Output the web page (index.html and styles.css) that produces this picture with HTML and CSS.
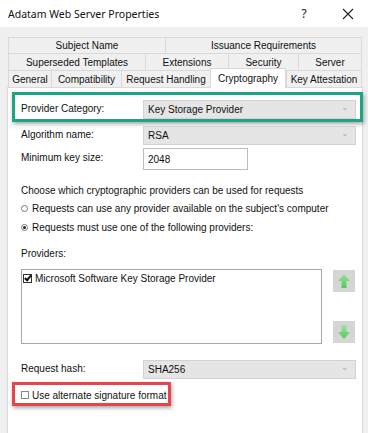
FILE: index.html
```html
<!DOCTYPE html>
<html lang="en">
<head>
    <meta charset="UTF-8">
    <meta name="viewport" content="width=device-width, initial-scale=1.0">
    <title>Adatam Web Server Properties</title>
    <link rel="stylesheet" href="styles.css">
</head>
<body>
    <div class="titlebar">
        <span class="title">Adatam Web Server Properties</span>
        <span class="help">?</span>
        <span class="close">
            <svg width="12" height="12" viewBox="0 0 12 12"><path d="M1 1L11 11M11 1L1 11" stroke="#222" stroke-width="1.1" fill="none"/></svg>
        </span>
    </div>

    <div class="tabs">
        <div class="tab-row row-1">
            <div class="tab">Subject Name</div>
            <div class="tab">Issuance Requirements</div>
        </div>
        <div class="tab-row row-2">
            <div class="tab">Superseded Templates</div>
            <div class="tab">Extensions</div>
            <div class="tab">Security</div>
            <div class="tab">Server</div>
        </div>
        <div class="tab-row row-3">
            <div class="tab">General</div>
            <div class="tab">Compatibility</div>
            <div class="tab">Request Handling</div>
            <div class="tab active">Cryptography</div>
            <div class="tab">Key Attestation</div>
        </div>
    </div>

    <div class="panel">
        <!-- highlighted row -->
        <div class="field highlight-green">
            <span class="label">Provider Category:</span>
            <div class="select">Key Storage Provider<span class="chev">&#8964;</span></div>
        </div>

        <div class="field row-algo">
            <span class="label">Algorithm name:</span>
            <div class="select">RSA<span class="chev">&#8964;</span></div>
        </div>

        <div class="field row-keysize">
            <span class="label">Minimum key size:</span>
            <div class="textbox">2048</div>
        </div>

        <p class="line choose">Choose which cryptographic providers can be used for requests</p>
        <div class="line radio-line first"><span class="radio"></span>Requests can use any provider available on the subject's computer</div>
        <div class="line radio-line second"><span class="radio checked"></span>Requests must use one of the following providers:</div>

        <p class="line providers-label">Providers:</p>
        <div class="providers">
            <div class="listbox">
                <div class="list-item"><span class="check on"></span>Microsoft Software Key Storage Provider</div>
            </div>
            <div class="move-btns">
                <div class="move-btn">
                    <svg width="14" height="16" viewBox="0 0 14 16"><defs><linearGradient id="gu" x1="0" y1="0" x2="0" y2="1"><stop offset="0" stop-color="#9be49b"/><stop offset="1" stop-color="#5cc45c"/></linearGradient></defs><path d="M7 1L13 8H9.5V15H4.5V8H1Z" fill="url(#gu)"/></svg>
                </div>
                <div class="move-btn">
                    <svg width="14" height="16" viewBox="0 0 14 16"><defs><linearGradient id="gd" x1="0" y1="0" x2="0" y2="1"><stop offset="0" stop-color="#9be49b"/><stop offset="1" stop-color="#5cc45c"/></linearGradient></defs><path d="M7 15L13 8H9.5V1H4.5V8H1Z" fill="url(#gd)"/></svg>
                </div>
            </div>
        </div>

        <div class="field row-hash">
            <span class="label">Request hash:</span>
            <div class="select">SHA256<span class="chev">&#8964;</span></div>
        </div>

        <div class="highlight-red">
            <span class="check"></span>Use alternate signature format
        </div>
    </div>
</body>
</html>
```

FILE: styles.css
```css
* {
    margin: 0;
    padding: 0;
    box-sizing: border-box;
}

body {
    font-family: 'Liberation Sans', Arial, sans-serif;
    font-size: 10px;
    color: #111;
    background: #f0f0f0;
    min-height: 100vh;
    display: flex;
    flex-direction: column;
}

/* title bar */
.titlebar {
    height: 27px;
    background: #fff;
    display: flex;
    align-items: center;
    padding-left: 8px;
}

.title {
    font-family: 'Noto Sans', sans-serif;
    font-size: 10.5px;
    color: #111;
    flex: 1;
}

.help {
    font-family: 'Noto Sans', sans-serif;
    font-size: 12px;
    color: #222;
    width: 10px;
    text-align: center;
    margin-right: 33px;
}

.close {
    display: flex;
    margin-right: 14px;
}

/* tabs */
.tabs {
    margin: 10px 6px 0 8px;
}

.tab-row {
    display: grid;
    border-right: 1px solid #d9d9d9;
}

.row-1 { grid-template-columns: 157px 1fr; height: 16px; }
.row-2 { grid-template-columns: 137px 83px 70px 1fr; height: 17px; }
.row-3 { grid-template-columns: 43px 70px 89px 76px 1fr; height: 17px; }

.tab {
    border-top: 1px solid #d9d9d9;
    border-left: 1px solid #d9d9d9;
    display: flex;
    align-items: center;
    justify-content: center;
    white-space: nowrap;
    color: #111;
}

.tab.active {
    background: #fff;
    margin-top: -2px;
    margin-bottom: -1px;
    border-right: 1px solid #d9d9d9;
    position: relative;
    z-index: 1;
    padding-bottom: 1px;
}

/* panel */
.panel {
    flex: 1;
    margin: 0 5px 0 7px;
    background: #fff;
    border: 1px solid #d9d9d9;
    border-bottom: none;
    padding-top: 4px;
}

.field {
    display: flex;
    align-items: center;
    padding-left: 13px;
}

.label {
    width: 122px;
    padding-bottom: 3px;
}

.select {
    width: 213px;
    height: 19px;
    background: #e5e5e5;
    border: 1px solid #d2d2d2;
    display: flex;
    align-items: center;
    justify-content: space-between;
    padding: 0 6px 0 4px;
}

.chev {
    color: #aaa;
    font-size: 9px;
    line-height: 1;
    margin-top: -4px;
}

.highlight-green {
    margin: 0 -1px 0 4px;
    border: 3px solid #1ca585;
    padding: 5px 4px 0 6px;
    height: 30px;
    box-shadow: 1px 2px 4px rgba(0, 0, 0, 0.35);
}

.row-algo {
    margin-top: 4px;
}

.row-keysize {
    margin-top: 3px;
}

.textbox {
    width: 105px;
    height: 22px;
    border: 1px solid #bdbdbd;
    padding-left: 4px;
    display: flex;
    align-items: center;
}

.line {
    padding-left: 13px;
    height: 14px;
    display: flex;
    align-items: center;
}

.choose {
    margin-top: 13px;
}

.radio-line.first {
    margin-top: 4px;
}

.radio-line.second {
    margin-top: 5px;
}

.radio {
    width: 7px;
    height: 7px;
    border: 1px solid #777;
    border-radius: 50%;
    margin-right: 4px;
    display: flex;
    align-items: center;
    justify-content: center;
}

.radio.checked::after {
    content: "";
    width: 3px;
    height: 3px;
    border-radius: 50%;
    background: #222;
}

.providers-label {
    margin-top: 12px;
}

.providers {
    display: flex;
    margin: 9px 0 0 13px;
    gap: 11px;
}

.listbox {
    width: 301px;
    height: 75px;
    border: 1px solid #a8a8a8;
    padding: 3px 1px;
}

.list-item {
    display: flex;
    align-items: center;
}

.check {
    width: 9px;
    height: 9px;
    border: 1px solid #888;
    margin-right: 3px;
    display: inline-flex;
    align-items: center;
    justify-content: center;
    flex-shrink: 0;
}

.check.on {
    border-color: #333;
}

.check.on::after {
    content: "";
    width: 2px;
    height: 5px;
    border: solid #111;
    border-width: 0 2px 2px 0;
    transform: rotate(40deg);
    margin-top: -2px;
}

.move-btns {
    display: flex;
    flex-direction: column;
    justify-content: space-between;
    padding: 1px 0 1px;
}

.move-btn {
    width: 22px;
    height: 22px;
    background: #d6d6d6;
    display: flex;
    align-items: center;
    justify-content: center;
}

.row-hash {
    margin-top: 16px;
}

.highlight-red {
    margin: 3px 0 0 4px;
    width: 159px;
    height: 24px;
    border: 3px solid #e5454b;
    padding: 2px 0 0 6px;
    display: flex;
    align-items: center;
    box-shadow: 1px 2px 4px rgba(0, 0, 0, 0.35);
    white-space: nowrap;
}

.highlight-red .check {
    width: 8px;
    height: 8px;
    border-color: #8a8a8a;
}
```
